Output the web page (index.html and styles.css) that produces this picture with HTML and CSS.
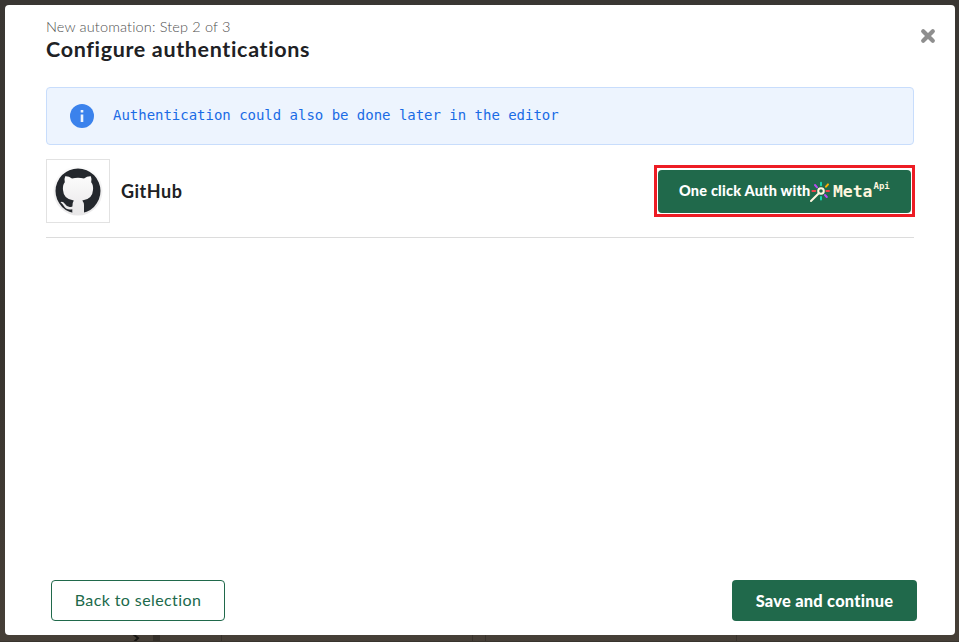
FILE: index.html
```html
<!DOCTYPE html>
<html lang="en">
<head>
<meta charset="utf-8">
<title>Configure authentications</title>
<link rel="stylesheet" href="styles.css">
</head>
<body>
<div class="backdrop">
  <main class="modal">
    <header class="header">
      <div>
        <p class="step">New automation: Step 2 of 3</p>
        <h1 class="title">Configure authentications</h1>
      </div>
      <button class="close" aria-label="Close"><svg width="16" height="16" viewBox="0 0 16 16"><path d="M3.200 3.200l9.600 9.600M12.800 3.200l-9.600 9.600" stroke="#8e8e8e" stroke-width="4.2" stroke-linecap="round"/></svg></button>
    </header>
    <div class="notice">
      <svg width="24" height="24" viewBox="0 0 24 24"><circle cx="12" cy="12" r="12" fill="#3b82ec"/><path d="M10.700 6h2.600v2.400h-2.600zM10.700 10.500h2.600V18h-2.600z" fill="#edf4fe"/></svg>
      <span class="notice-text">Authentication could also be done later in the editor</span>
    </div>
    <section class="service">
      <div class="logo"><svg width="50" height="50" viewBox="0 0 50 50">
        <defs><linearGradient id="disc" x2="0" y2="1"><stop stop-color="#fcfcfc"/><stop offset="1" stop-color="#e8e7e8"/></linearGradient></defs>
        <circle cx="25" cy="25" r="24.500" fill="url(#disc)"/>
        <circle cx="25" cy="25" r="22.500" fill="#24282d"/>
        <path d="M12.200 10.300Q15.500 10 19 12.400Q25 11 31 12.400Q34.500 10 37.800 10.300Q39 13 38.200 16.200Q40.500 19 40 24Q39.500 33.500 29.300 34.400Q31 36.500 31 39V47.300Q25 49 19.300 47.300V43.200Q13.500 44.300 11.200 40.500Q9.500 37.500 7.500 36.200Q9.700 35 12 38Q14.700 42.300 19.400 40.400Q19.500 36 20.800 34.400Q10.500 33.500 10 24Q9.500 19 11.800 16.200Q11 13 12.200 10.300Z" fill="url(#disc)"/>
      </svg></div>
      <h2 class="name">GitHub</h2>
      <div class="highlight">
        <button class="auth">
          <span class="auth-text">One click Auth with</span>
          <svg class="wand" width="20" height="22" viewBox="0 0 20 22" fill="none" stroke-width="2" stroke-linecap="round">
            <path d="M11 1.800v2.400M11 16v2.400" stroke="#16d3ad"/><path d="M5 4l2 2.300M15 14l1.800 2" stroke="#b74cf2"/><path d="M16 5.700l2-2.300" stroke="#ffb000"/><path d="M2.400 10h2.800M16.400 10H19" stroke="#f1444c"/>
            <circle cx="11" cy="10" r="2.800" stroke="#fff6df"/><path d="M8.800 12.200L1 20" stroke="#fff6df"/>
          </svg>
          <span class="brand">Meta</span><span class="brand-api">Api</span>
        </button>
      </div>
    </section>
    <footer class="footer">
      <button class="btn back"><span>Back to selection</span></button>
      <button class="btn save"><span>Save and continue</span></button>
    </footer>
  </main>
  <div class="page-edge"><svg width="959" height="7" viewBox="0 0 959 7" fill="none"><path d="M133-1l5 4-5 5" stroke="#171512" stroke-width="2"/><path d="M153 0h7v7h-7z" fill="#342f29"/><path d="M221.500 0v7M472.500 0v7M485.500 0v7M736.500 0v7" stroke="#37322c"/><path d="M0 6.500h959" stroke="#38342e"/></svg></div>
</div>
</body>
</html>
```
FILE: styles.css
```css
* { box-sizing: border-box; }
body { margin: 0; font-family: Lato, "Liberation Sans", sans-serif; color: #202124; }
p, h1, h2 { margin: 0; }
button { font: inherit; padding: 0; border: 0; background: none; }
svg { display: block; flex: none; }
.backdrop { height: 642px; padding: 5px 4px 0 5px; background: linear-gradient(#3a3733, #37332e 50%, #463f37); overflow: hidden; }
.modal { height: 630px; display: flex; flex-direction: column; background: #fff; border-radius: 4px; padding: 0 41px 14px; }
.header { height: 82px; padding-top: 13px; display: flex; justify-content: space-between; }
.step { font-size: 14.5px; line-height: 18px; font-weight: 300; color: #505050; letter-spacing: .15px; white-space: nowrap; }
.title { font-size: 21.5px; line-height: 26px; font-weight: 700; letter-spacing: .65px; white-space: nowrap; }
.close { width: 16px; height: 16px; margin: 10px -22px 0 0; }
.notice { height: 58px; display: flex; align-items: center; gap: 19px; padding-left: 23px; border: 1px solid #c8ddfc; border-radius: 4px; background: #edf4fe; }
.notice-text { padding-bottom: 2px; font: 14px/20px "DejaVu Sans Mono", monospace; letter-spacing: -.02px; color: #1a6be5; white-space: nowrap; }
.service { height: 93px; display: flex; align-items: center; border-bottom: 1px solid #dcdcdc; }
.logo { width: 64px; height: 64px; display: grid; place-items: center; border: 1px solid #e2e2e2; }
.name { margin-left: 11px; font-size: 18px; line-height: 24px; font-weight: 700; letter-spacing: .5px; }
.highlight { margin: 0 -1px 0 auto; width: 261px; height: 52px; padding: 2px 1px 1px; border: 3px solid #ed1c24; }
.auth { width: 253px; height: 43px; display: flex; align-items: center; padding-left: 20px; color: #fff; background: #20694b; border-radius: 4px; }
.auth-text { width: 132px; padding: 0 0 2px 1px; font-size: 14.5px; font-weight: 900; letter-spacing: .2px; text-align: left; white-space: nowrap; }
.brand { margin-left: 3px; font: 700 16.4px/20px "DejaVu Sans Mono", monospace; color: #fff6df; }
.brand-api { margin: -11px 0 0 1px; font: 700 9px/12px "DejaVu Sans Mono", monospace; color: #fff6df; }
.footer { margin: auto -3px 0 5px; display: flex; justify-content: space-between; }
.btn { height: 41px; padding-bottom: 1px; border-radius: 4px; font-size: 16px; white-space: nowrap; }
.back { width: 174px; padding-bottom: 2px; color: #20694b; border: 1px solid #20694b; letter-spacing: .4px; }
.save { width: 185px; color: #fff; background: #20694b; font-size: 16.4px; font-weight: 900; letter-spacing: .25px; }
.page-edge { width: 959px; margin-left: -5px; }
```
